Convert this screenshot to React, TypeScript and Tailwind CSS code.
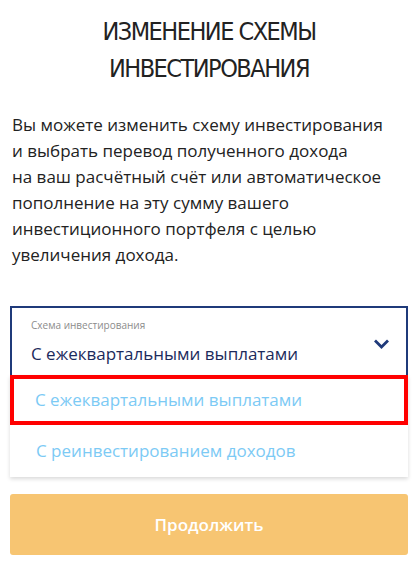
import React from "react";

export default function App() {
  const body = { fontFamily: '"Open Sans", "Noto Sans", sans-serif' };
  return (
    <div className="w-[418px] h-[561px] bg-white overflow-hidden" style={body}>
      <div className="px-[10px] pt-[13px]">
        <h1
          className="text-center text-[25px] leading-[37px] font-normal tracking-[-1.5px] text-[#222222]"
          style={{ fontFamily: '"Liberation Sans Narrow", "DejaVu Sans Condensed", sans-serif' }}
        >
          ИЗМЕНЕНИЕ СХЕМЫ
          <br />
          ИНВЕСТИРОВАНИЯ
        </h1>
        <p className="mt-[25px] px-[2px] text-[17px] leading-[26px] text-[#222222]">
          Вы можете изменить схему инвестирования
          <br />
          и выбрать перевод полученного дохода
          <br />
          на ваш расчётный счёт или автоматическое
          <br />
          пополнение на эту сумму вашего
          <br />
          инвестиционного портфеля с целью
          <br />
          увеличения дохода.
        </p>

        <div className="mt-[38px]">
          <div className="h-[69px] border-2 border-b-0 border-[#1f3a7a] pl-[19px] pr-[16px] pt-[10px] flex items-start justify-between">
            <div className="flex flex-col">
              <span className="text-[10px] leading-[14px] text-[#8c8c8c]">Схема инвестирования</span>
              <span className="mt-[10px] text-[17px] leading-[24px] text-[#1c2b5c]">С ежеквартальными выплатами</span>
            </div>
            <svg width="17" height="12" viewBox="0 0 17 12" className="mt-[20px]">
              <path d="M2 2.5 L8.5 9 L15 2.5" fill="none" stroke="#1f3a7a" strokeWidth="2.8" />
            </svg>
          </div>
          <div className="bg-white shadow-[0_2px_4px_rgba(0,0,0,0.15)]">
            <div className="h-[50px] border-4 border-[#ff0000] flex items-center pl-[21px]">
              <span className="text-[17px] text-[#7ccaf5]">С ежеквартальными выплатами</span>
            </div>
            <div className="h-[52px] flex items-center pl-[26px]">
              <span className="text-[17px] text-[#7ccaf5]">С реинвестированием доходов</span>
            </div>
          </div>
        </div>

        <button className="mt-[17px] w-full h-[61px] rounded-[3px] bg-[#f7c572] text-white text-[17px] font-semibold flex items-center justify-center">
          Продолжить
        </button>
      </div>
    </div>
  );
}
